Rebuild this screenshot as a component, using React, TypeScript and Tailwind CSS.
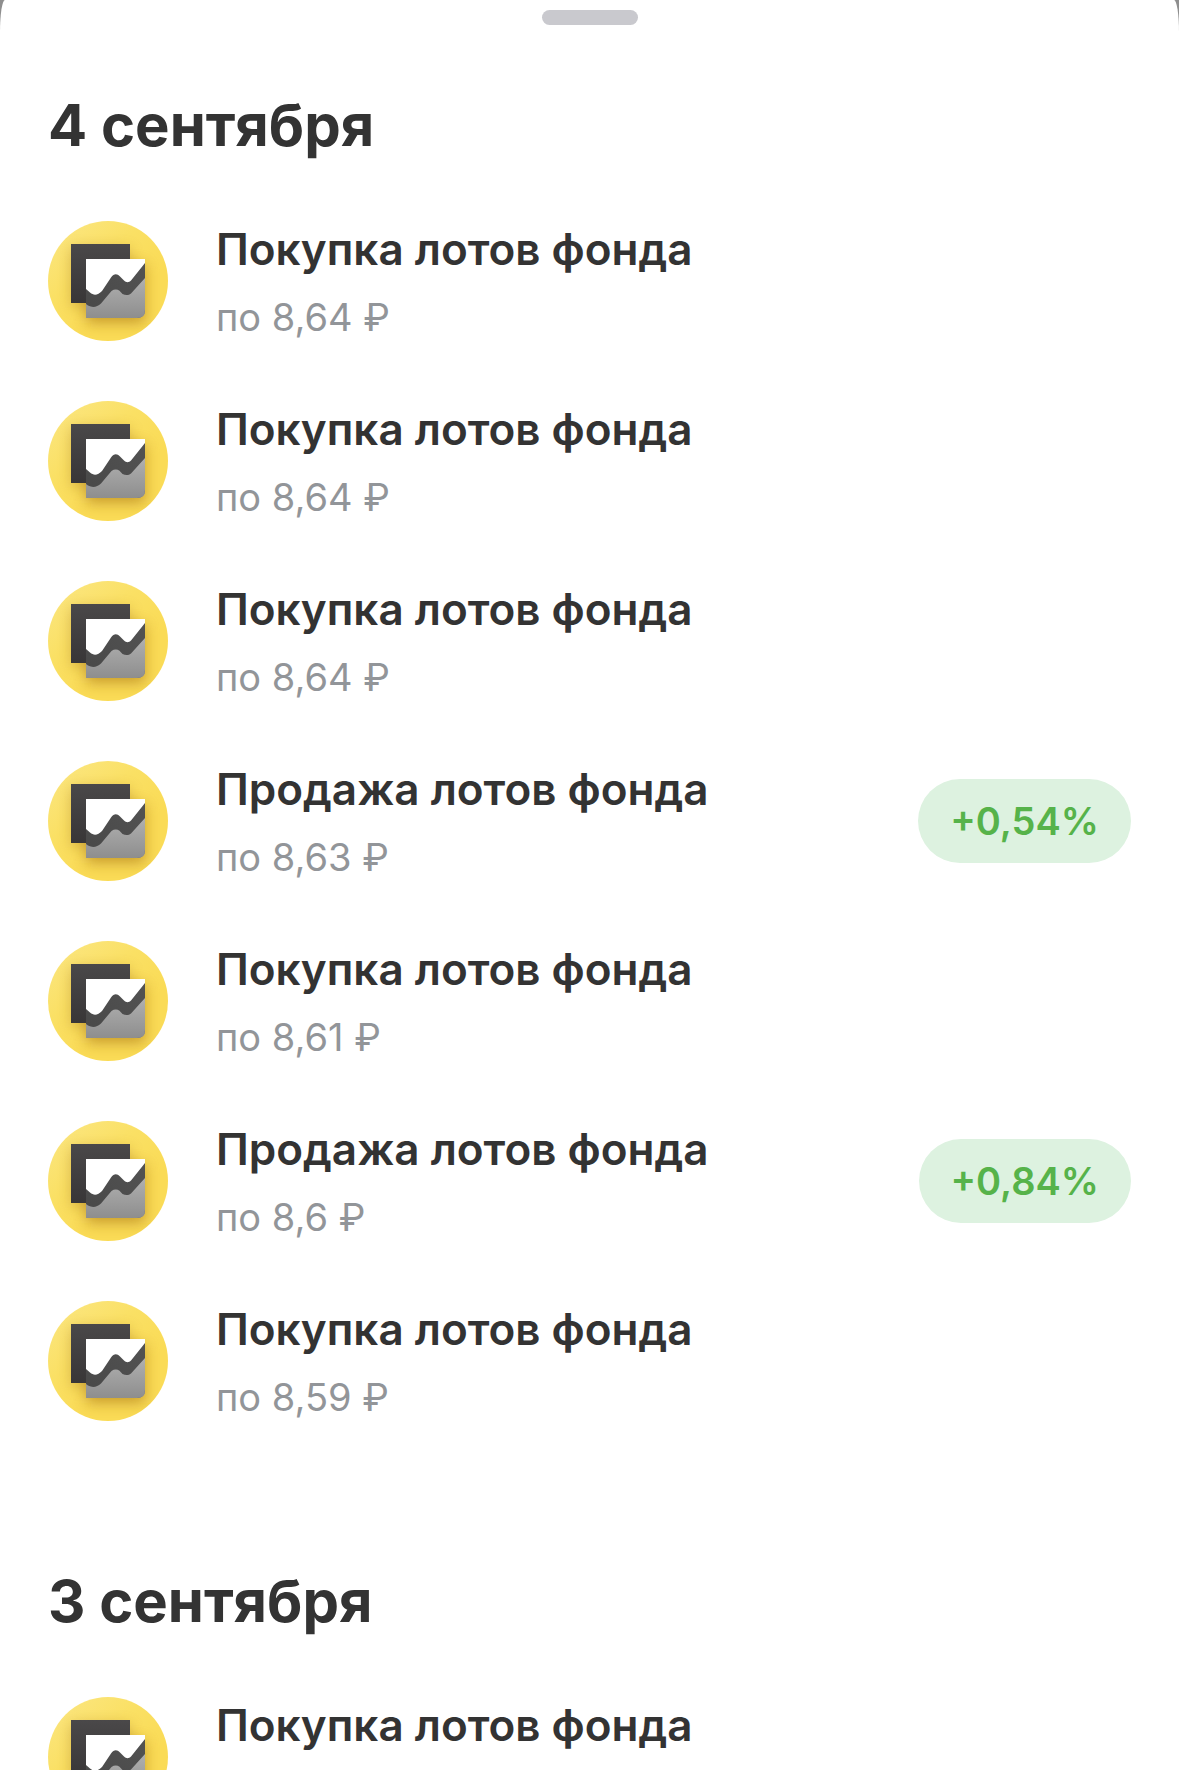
import React from 'react';

type Operation = {
  title: string;
  price: string;
  change?: string;
};

type Day = {
  date: string;
  operations: Operation[];
};

const days: Day[] = [
  {
    date: '4 сентября',
    operations: [
      { title: 'Покупка лотов фонда', price: 'по 8,64 ₽' },
      { title: 'Покупка лотов фонда', price: 'по 8,64 ₽' },
      { title: 'Покупка лотов фонда', price: 'по 8,64 ₽' },
      { title: 'Продажа лотов фонда', price: 'по 8,63 ₽', change: '+0,54%' },
      { title: 'Покупка лотов фонда', price: 'по 8,61 ₽' },
      { title: 'Продажа лотов фонда', price: 'по 8,6 ₽', change: '+0,84%' },
      { title: 'Покупка лотов фонда', price: 'по 8,59 ₽' },
    ],
  },
  {
    date: '3 сентября',
    operations: [{ title: 'Покупка лотов фонда', price: '' }],
  },
];

const FundIcon = () => (
  <svg viewBox="0 0 120 120" className="size-[120px] shrink-0" aria-hidden="true">
    <defs>
      <linearGradient id="coin" x1="0.1" y1="0.1" x2="0.6" y2="0.7">
        <stop offset="0" stopColor="#fbe57c" />
        <stop offset="0.5" stopColor="#fae064" />
        <stop offset="1" stopColor="#fadb56" />
      </linearGradient>
      <linearGradient id="back" x1="0" y1="0" x2="0" y2="1">
        <stop offset="0" stopColor="#4a4849" />
        <stop offset="1" stopColor="#383637" />
      </linearGradient>
      <linearGradient id="area" x1="0" y1="0" x2="0" y2="1">
        <stop offset="0" stopColor="#b0b0b0" />
        <stop offset="1" stopColor="#8e8e8e" />
      </linearGradient>
      <linearGradient id="line" x1="0" y1="1" x2="1" y2="0">
        <stop offset="0" stopColor="#484848" />
        <stop offset="1" stopColor="#525252" />
      </linearGradient>
      <clipPath id="circle">
        <circle cx="60" cy="60" r="60" />
      </clipPath>
      <clipPath id="card">
        <path d="M38 38H97V89Q97 97 89 97H38Z" />
      </clipPath>
      <filter id="blur" x="-40%" y="-40%" width="180%" height="180%">
        <feGaussianBlur stdDeviation="7" />
      </filter>
    </defs>
    <g clipPath="url(#circle)">
      <rect width="120" height="120" fill="url(#coin)" />
      <rect x="23" y="27" width="59" height="59" fill="#a87412" opacity="0.4" filter="url(#blur)" />
      <rect x="38" y="43" width="59" height="59" fill="#a87412" opacity="0.6" filter="url(#blur)" />
      <rect x="23" y="23" width="59" height="59" fill="url(#back)" />
      <g clipPath="url(#card)">
        <rect x="38" y="38" width="59" height="59" fill="#fff" />
        <path
          d="M38 68L42 71.5C46 75 50 74 54 70L63 56.5C66 52.5 69 52.5 72 55.5L76 59.5C78.500 62 81 61.500 83 59.500L97 42V97H38Z"
          fill="url(#line)"
        />
        <path
          d="M38 83L40 84.5C45 87 49 86 53 82.500L63.500 70C66 68.300 69 68 71.500 69.700L74.500 73C77.500 74.500 80.500 74.500 83 72.500L97 57V97H38Z"
          fill="url(#area)"
        />
      </g>
    </g>
  </svg>
);

const OperationRow = ({ title, price, change }: Operation) => (
  <li className="flex items-center">
    <FundIcon />
    <div className="ml-12 flex-1">
      <p className="text-[44px] leading-[64px] font-semibold text-[#333333]">{title}</p>
      <p className="mt-2 min-h-14 text-[38px] leading-[56px] text-[#929599]">{price}</p>
    </div>
    {change && (
      <span className="rounded-full bg-[#ddf2e0] px-8 text-[38px] leading-[84px] font-semibold text-[#56b34a]">
        {change}
      </span>
    )}
  </li>
);

const App = () => {
  return (
    <div className="h-screen overflow-hidden bg-[#8e8e8e] font-[Inter,'Noto_Sans',sans-serif]">
      <main className="min-h-full rounded-tl-[5px_32px] rounded-tr-[5px_32px] bg-white px-12 pt-[10px]">
        {/* Drag handle */}
        <div className="mx-auto h-[15px] w-24 rounded-full bg-[#c9c9ce]" />

        {days.map((day) => (
          <section key={day.date} className="pt-16 pb-[76px]">
            <h2 className="text-[58px] leading-[72px] font-bold text-[#333333]">{day.date}</h2>
            <ul className="mt-14 flex flex-col gap-[52px]">
              {day.operations.map((operation, index) => (
                <OperationRow key={index} {...operation} />
              ))}
            </ul>
          </section>
        ))}
      </main>
    </div>
  );
};

export default App;
